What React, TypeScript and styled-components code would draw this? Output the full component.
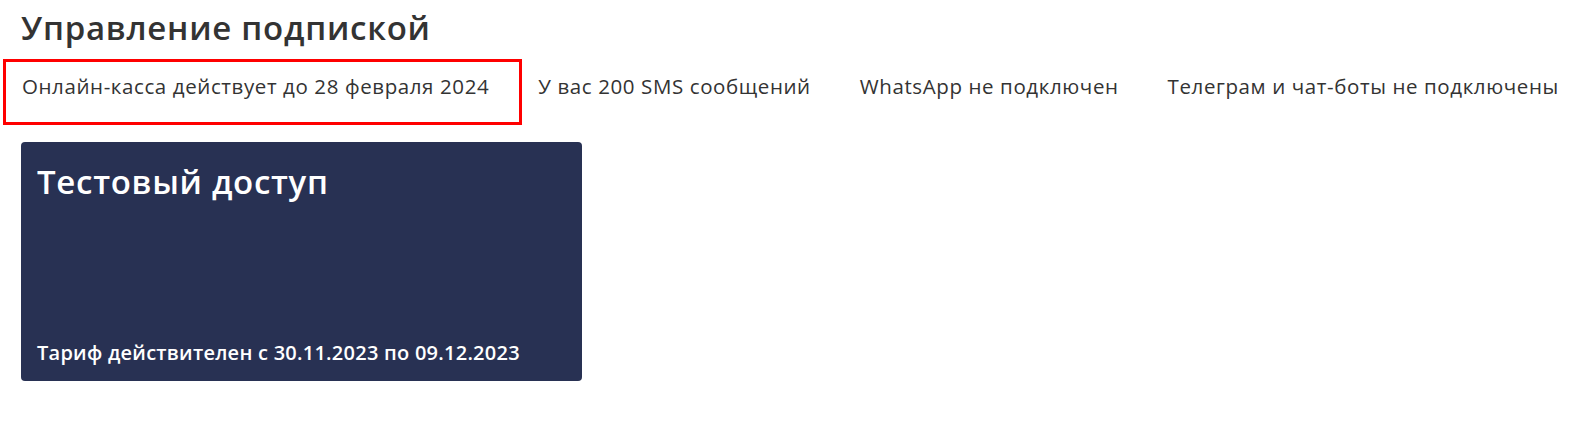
import styled, { createGlobalStyle } from 'styled-components';

const GlobalStyle = createGlobalStyle`
  body {
    margin: 0;
    background: #fff;
    font-family: 'Open Sans', 'Noto Sans', sans-serif;
    color: #333;
  }
`;

const Page = styled.div`
  padding: 8px 0 0 3px;
`;

const Title = styled.h1`
  margin: 0 0 0 18px;
  font-size: 33px;
  font-weight: 600;
  line-height: 40px;
  letter-spacing: 0.75px;
  color: #333;
`;

const Tabs = styled.div`
  display: flex;
  margin-top: 11px;
`;

const Tab = styled.div<{ $active?: boolean }>`
  padding: 11px 30px 0 16px;
  height: 66px;
  box-sizing: border-box;
  font-size: 20.5px;
  line-height: 26px;
  letter-spacing: 0.6px;
  color: #333;
  white-space: nowrap;
  border: 3px solid ${p => (p.$active ? '#ff0000' : 'transparent')};
  margin-left: ${p => (p.$active ? '0' : '-3px')};
`;

const Card = styled.div`
  margin: 17px 0 0 18px;
  width: 561px;
  height: 239px;
  box-sizing: border-box;
  padding: 20px 16px 16px;
  background: #283153;
  border-radius: 4px;
  color: #fff;
  display: flex;
  flex-direction: column;
  justify-content: space-between;
`;

const CardTitle = styled.div`
  font-size: 33px;
  font-weight: 600;
  line-height: 40px;
  letter-spacing: 0.7px;
`;

const CardNote = styled.div`
  font-size: 20px;
  font-weight: 600;
  line-height: 24px;
  letter-spacing: 0.25px;
`;

const tabs = [
  'Онлайн-касса действует до 28 февраля 2024',
  'У вас 200 SMS сообщений',
  'WhatsApp не подключен',
  'Телеграм и чат-боты не подключены',
];

export default function App() {
  return (
    <Page>
      <GlobalStyle />
      <Title>Управление подпиской</Title>
      <Tabs>
        {tabs.map((t, i) => (
          <Tab key={t} $active={i === 0}>
            {t}
          </Tab>
        ))}
      </Tabs>
      <Card>
        <CardTitle>Тестовый доступ</CardTitle>
        <CardNote>Тариф действителен с 30.11.2023 по 09.12.2023</CardNote>
      </Card>
    </Page>
  );
}
